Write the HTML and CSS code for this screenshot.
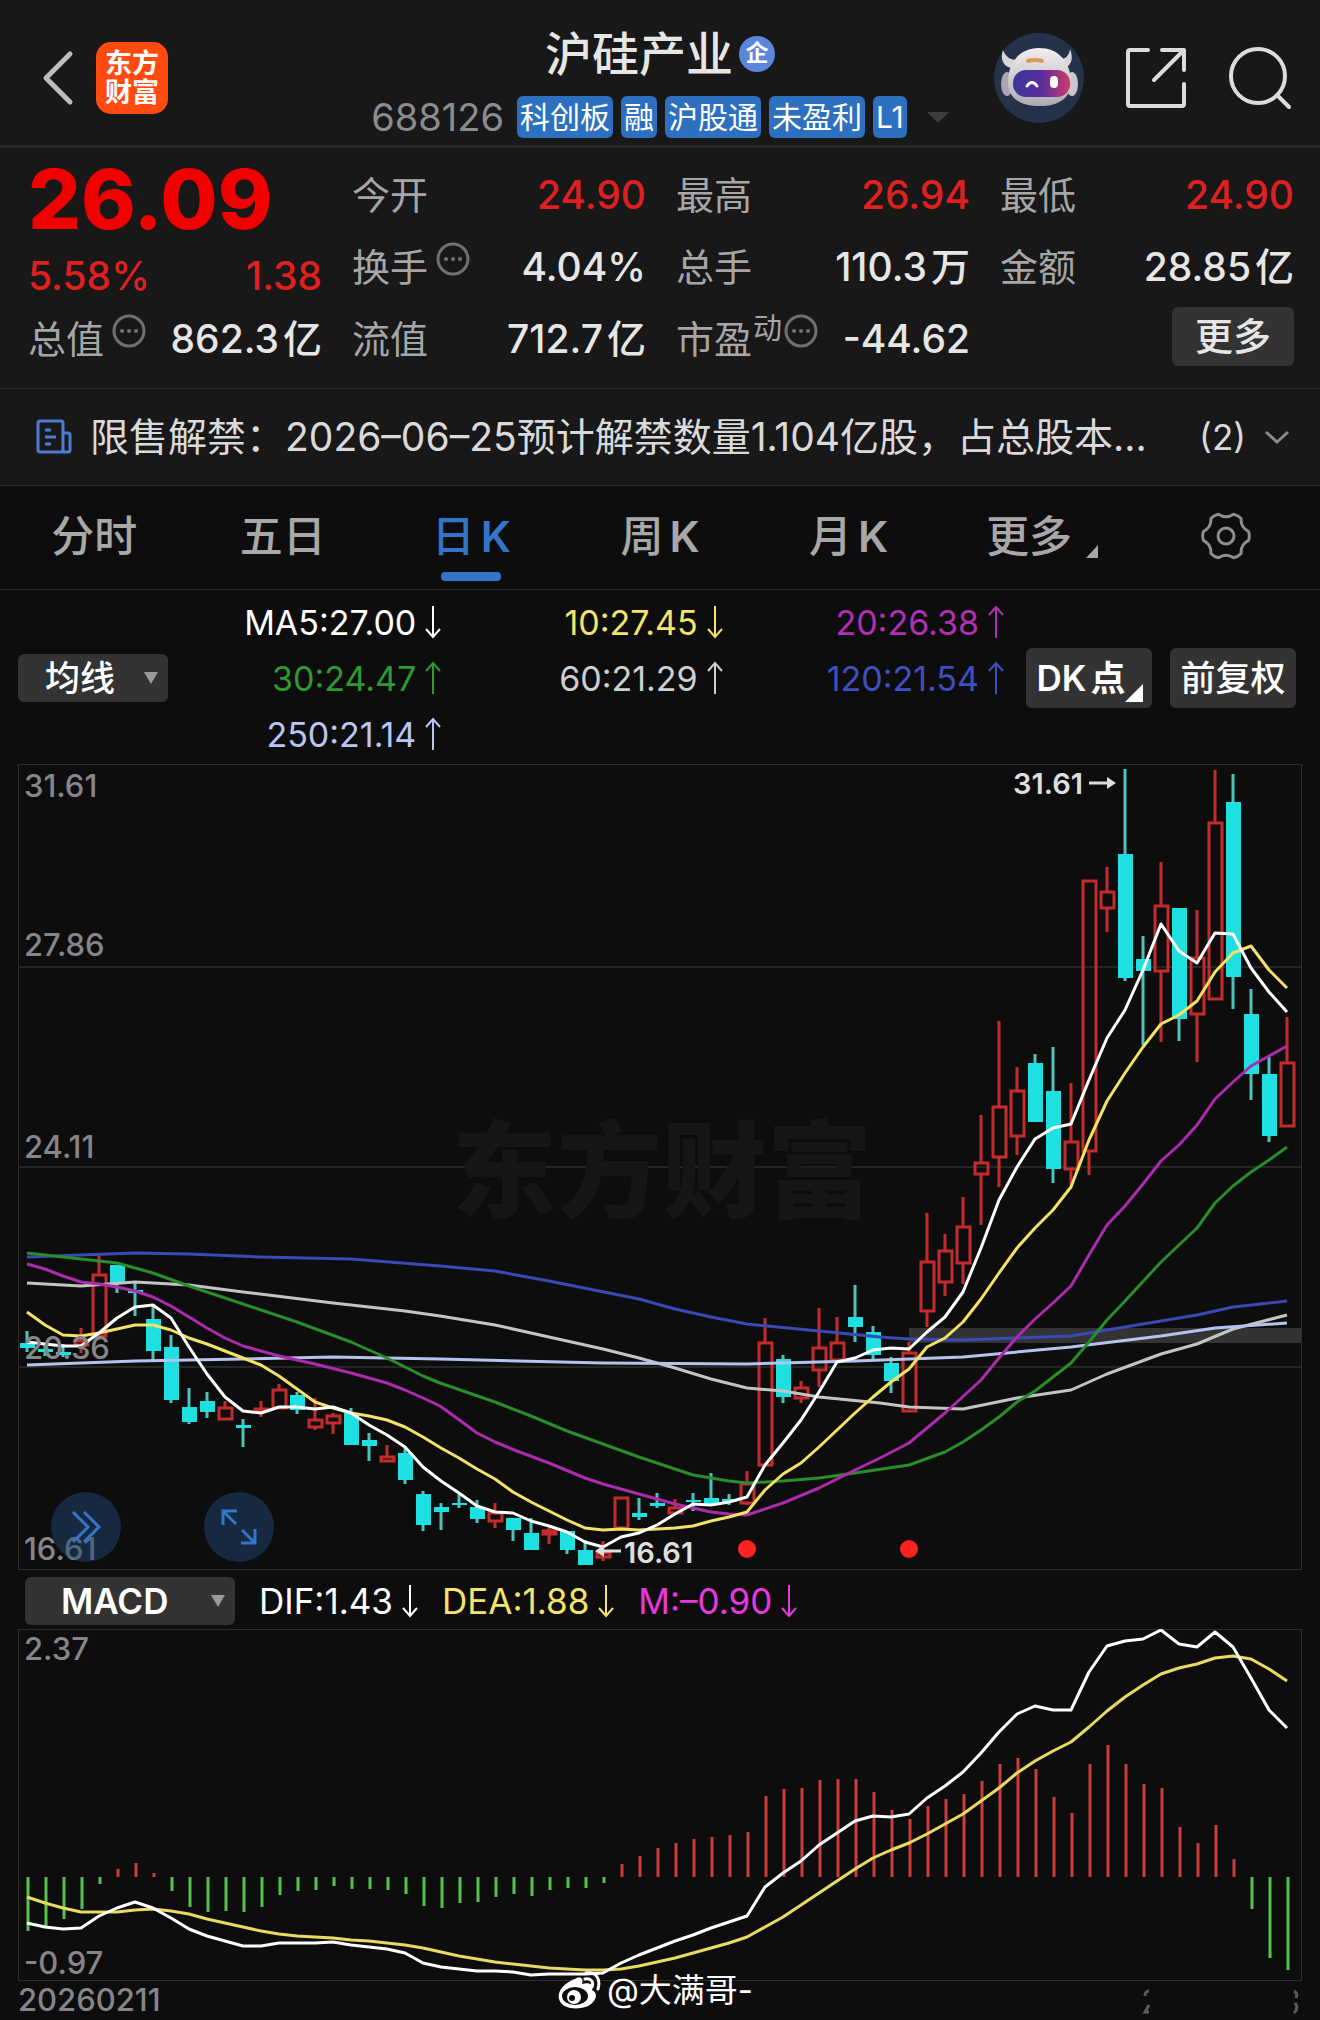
FILE: index.html
```html
<!DOCTYPE html>
<html lang="zh-CN">
<head>
    <meta charset="UTF-8">
    <meta name="viewport" content="width=device-width, initial-scale=1.0">
    <title>沪硅产业 688126</title>
    <link rel="stylesheet" href="styles.css">
</head>
<body>
    <svg width="0" height="0" class="defs" aria-hidden="true">
        <symbol id="down" viewBox="0 0 16 34"><path d="M8 1V32M1 24L8 32L15 24"/></symbol>
        <symbol id="up" viewBox="0 0 16 34"><path d="M8 33V2M1 10L8 2L15 10"/></symbol>
        <symbol id="info" viewBox="0 0 34 34"><circle cx="17" cy="17" r="15"/><path d="M10 17h.1M17 17h.1M24 17h.1" class="dots"/></symbol>
    </svg>

    <header class="header">
        <div class="header-left">
            <button class="icon-btn back" aria-label="返回">
                <svg width="34" height="56" viewBox="0 0 34 56"><path d="M30 4L6 28L30 52"/></svg>
            </button>
            <div class="logo">东方<br>财富</div>
        </div>
        <div class="header-title">
            <h1>沪硅产业<span class="badge">企</span></h1>
            <div class="tags">
                <span class="code">688126</span>
                <span class="tag">科创板</span>
                <span class="tag">融</span>
                <span class="tag">沪股通</span>
                <span class="tag">未盈利</span>
                <span class="tag">L1</span>
                <span class="caret"></span>
            </div>
        </div>
        <div class="header-right">
            <button class="icon-btn robot" aria-label="智能助手">
                <svg width="90" height="90" viewBox="0 0 90 90">
                    <defs>
                        <linearGradient id="visor" x1="0" x2="1">
                            <stop offset="0" stop-color="#39369a"/>
                            <stop offset=".5" stop-color="#5a2c9c"/>
                            <stop offset="1" stop-color="#cf3a68"/>
                        </linearGradient>
                        <linearGradient id="helmet" x1="0" x2="0" y1="0" y2="1">
                            <stop offset="0" stop-color="#f2efee"/>
                            <stop offset="1" stop-color="#aeaab4"/>
                        </linearGradient>
                    </defs>
                    <circle cx="45" cy="45" r="45" fill="#26314a"/>
                    <path d="M9 17C6 26 9 33 17 35L24 27C16 27 12 24 9 17ZM76 16C80 26 77 33 70 35L63 27C71 27 75 23 76 16Z" fill="#d9d6da"/>
                    <ellipse cx="13" cy="51" rx="6" ry="12" fill="#a9a6b2"/>
                    <ellipse cx="78" cy="51" rx="6" ry="12" fill="#c9c6cc"/>
                    <path d="M45 15C64 15 76 28 77 47C78 64 66 73 46 73C26 73 13 65 14 47C15 28 27 15 45 15Z" fill="url(#helmet)"/>
                    <rect x="19" y="37" width="57" height="27" rx="13" fill="url(#visor)"/>
                    <path d="M34 28Q41 26 48 28" stroke="#d99a55" stroke-width="4" fill="none"/>
                    <path d="M33 53Q38 46 43 53" stroke="#fff" stroke-width="3" fill="none"/>
                    <rect x="56" y="43" width="8" height="12" rx="4" fill="#fff"/>
                </svg>
            </button>
            <button class="icon-btn" aria-label="分享">
                <svg width="64" height="64" viewBox="0 0 64 64"><path d="M24 4H6Q4 4 4 6V58Q4 60 6 60H58Q60 60 60 58V38M38 4H60V24M59 5L30 34"/></svg>
            </button>
            <button class="icon-btn" aria-label="搜索">
                <svg width="64" height="64" viewBox="0 0 64 64"><circle cx="30" cy="30" r="27"/><path d="M49 49L61 61"/></svg>
            </button>
        </div>
    </header>

    <section class="quote">
        <div class="cell price">26.09</div>
        <div class="cell"><span class="label">今开</span><span class="red">24.90</span></div>
        <div class="cell"><span class="label">最高</span><span class="red">26.94</span></div>
        <div class="cell"><span class="label">最低</span><span class="red">24.90</span></div>

        <div class="cell change"><span class="red">5.58%</span><span class="red">1.38</span></div>
        <div class="cell"><span class="label">换手<svg class="info"><use href="#info"/></svg></span><span>4.04%</span></div>
        <div class="cell"><span class="label">总手</span><span>110.3<i>万</i></span></div>
        <div class="cell"><span class="label">金额</span><span>28.85<i>亿</i></span></div>

        <div class="cell"><span class="label">总值<svg class="info"><use href="#info"/></svg></span><span>862.3<i>亿</i></span></div>
        <div class="cell"><span class="label">流值</span><span>712.7<i>亿</i></span></div>
        <div class="cell"><span class="label">市盈<sup>动</sup><svg class="info tight"><use href="#info"/></svg></span><span>-44.62</span></div>
        <div class="cell end"><button class="more">更多</button></div>
    </section>

    <section class="notice">
        <svg class="doc" width="36" height="36" viewBox="0 0 36 36"><path d="M4 2H25Q27 2 27 4V33H4Q2 33 2 31V4Q2 2 4 2ZM27 14H32Q34 14 34 16V31Q34 33 32 33H27M9 11H15M9 18H20M9 25H15"/></svg>
        <a href="#">限售解禁：2026–06–25预计解禁数量1.104亿股，占总股本...</a>
        <span class="count">(2)</span>
        <svg width="26" height="16" viewBox="0 0 26 16" class="chev"><path d="M2 3L13 13L24 3"/></svg>
    </section>

    <nav class="tabs">
        <a href="#">分时</a>
        <a href="#">五日</a>
        <a href="#" class="active">日<b>K</b></a>
        <a href="#">周<b>K</b></a>
        <a href="#">月<b>K</b></a>
        <a href="#" class="corner">更多</a>
        <button class="icon-btn gear" aria-label="设置">
            <svg width="50" height="50" viewBox="-25 -25 50 50">
                <path d="M22.6-4.4Q24 0 22.6 4.4Q14.5 8.4 15.1 17.4Q12 20.8 7.5 21.7Q0 16.8-7.5 21.7Q-12 20.8-15.1 17.4Q-14.5 8.4-22.6 4.4Q-24 0-22.6-4.4Q-14.5-8.4-15.1-17.4Q-12-20.8-7.5-21.7Q0-16.8 7.5-21.7Q12-20.8 15.1-17.4Q14.5-8.4 22.6-4.4Z"/>
                <circle r="8"/>
            </svg>
        </button>
    </nav>

    <section class="ma">
        <div class="select-box">
            <select aria-label="主图指标"><option>均线</option></select>
        </div>
        <div class="ma-values">
            <span class="c-white">MA5:27.00<svg class="arrow"><use href="#down"/></svg></span>
            <span class="c-yellow">10:27.45<svg class="arrow"><use href="#down"/></svg></span>
            <span class="c-purple">20:26.38<svg class="arrow"><use href="#up"/></svg></span>
            <span class="c-green">30:24.47<svg class="arrow"><use href="#up"/></svg></span>
            <span class="c-grey">60:21.29<svg class="arrow"><use href="#up"/></svg></span>
            <span class="c-blue">120:21.54<svg class="arrow"><use href="#up"/></svg></span>
            <span class="c-pale">250:21.14<svg class="arrow"><use href="#up"/></svg></span>
        </div>
        <div class="ma-buttons">
            <button class="dk">DK<i>点</i></button>
            <button>前复权</button>
        </div>
    </section>

    <section class="chart">
        <svg id="kline" viewBox="18 764 1284 806"></svg>
        <button class="round first" aria-label="展开">
            <svg width="30" height="34" viewBox="0 0 30 34"><path d="M2 2L17 17L2 32M13 2L28 17L13 32"/></svg>
        </button>
        <button class="round second" aria-label="全屏">
            <svg width="36" height="36" viewBox="0 0 36 36"><path d="M2 16V2H16M2 2L15 15M34 20V34H20M34 34L21 21"/></svg>
        </button>
    </section>

    <section class="macd">
        <div class="select-box wide">
            <select aria-label="副图指标"><option>MACD</option></select>
        </div>
        <span class="c-white">DIF:1.43<svg class="arrow"><use href="#down"/></svg></span>
        <span class="c-yellow">DEA:1.88<svg class="arrow"><use href="#down"/></svg></span>
        <span class="c-pink">M:–0.90<svg class="arrow"><use href="#down"/></svg></span>
    </section>

    <section class="chart">
        <svg id="macd" viewBox="18 1629 1284 352"></svg>
    </section>

    <footer class="footer">
        <span>20260211</span>
        <svg width="158" height="28" viewBox="0 0 158 28" class="smudge"><path d="M7 3Q3 3 3 8M7 17L3 24H7M152 3Q156 5 154 10M153 15Q157 20 152 25"/></svg>
        <div class="credit">
            <svg width="46" height="40" viewBox="0 0 46 40">
                <path d="M18 9C23 6 27 8 25 14C32 12 37 14 35 20C42 23 39 32 31 36C22 40 5 40 2 29C0 20 9 12 18 9Z" fill="#fff"/>
                <ellipse cx="18" cy="26" rx="13" ry="9" fill="#0d0d0d"/>
                <circle cx="17" cy="27" r="7" fill="#fff"/>
                <circle cx="15" cy="28" r="3" fill="#0d0d0d"/>
                <path d="M28 9C34 8 37 12 35 17M29 3C39 1 44 9 41 19" fill="none" stroke="#fff" stroke-width="3" stroke-linecap="round"/>
            </svg>
            @大满哥-
        </div>
    </footer>

    <script src="script.js"></script>
</body>
</html>
```
FILE: styles.css
```css
* {
    box-sizing: border-box;
}
body {
    margin: 0;
    background-color: #0d0d0d;
    color: #e6e6e6;
    font-family: Inter, "Noto Sans CJK SC", sans-serif;
    font-size: 38px;
}
button, select {
    font-family: inherit;
    color: inherit;
    border: none;
    padding: 0;
}
a {
    color: inherit;
    text-decoration: none;
}
i {
    font-style: normal;
    margin-left: 4px;
}
svg {
    display: block;
    fill: none;
}
.defs {
    position: absolute;
}
.icon-btn {
    background: none;
    stroke: #dcdcdc;
    stroke-width: 4;
    stroke-linecap: round;
    stroke-linejoin: round;
}

/* header */
.header {
    display: grid;
    grid-template-columns: 1fr auto 1fr;
    height: 148px;
    padding: 0 28px;
    background-color: #181818;
    border-bottom: 3px solid #272727;
}
.header-left {
    display: flex;
    align-items: center;
    gap: 22px;
    height: 156px;
    padding-left: 12px;
}
.back {
    stroke: #bdbdbd;
    stroke-width: 5;
}
.logo {
    width: 72px;
    height: 72px;
    padding-top: 7px;
    border-radius: 15px;
    background-color: #ff4a10;
    color: #fff;
    font-size: 27px;
    line-height: 29px;
    font-weight: 700;
    text-align: center;
}
.header-title {
    padding-top: 22px;
}
.header-title h1 {
    display: flex;
    justify-content: center;
    align-items: center;
    gap: 6px;
    margin: 0 0 10px;
    font-size: 47px;
    line-height: 64px;
    font-weight: 500;
}
.badge {
    width: 36px;
    height: 36px;
    border-radius: 50%;
    background-color: #5b86dd;
    color: #fff;
    font-size: 23px;
    line-height: 34px;
    font-weight: 700;
    text-align: center;
}
.tags {
    display: flex;
    align-items: center;
    gap: 8px;
}
.code {
    margin-right: 5px;
    color: #8b8b90;
    font-size: 38px;
    line-height: 42px;
}
.tag {
    padding: 0 3px;
    border-radius: 6px;
    background-color: #2d70c0;
    color: #fff;
    font-size: 30px;
    line-height: 42px;
}
.caret {
    margin-left: 12px;
    border: 11px solid transparent;
    border-top-color: #3c3c3c;
    border-bottom-width: 0;
}
.header-right {
    display: flex;
    justify-content: flex-end;
    align-items: center;
    gap: 40px;
    height: 156px;
}
.robot {
    stroke: none;
}

/* quote */
.quote {
    display: grid;
    grid-template-columns: repeat(4, 1fr);
    grid-auto-rows: 72px;
    column-gap: 30px;
    padding: 11px 26px 13px 28px;
    background-color: #181818;
    border-bottom: 1px solid #2b2b2b;
    font-size: 39px;
    line-height: 50px;
    font-weight: 500;
}
.cell {
    display: flex;
    justify-content: space-between;
    align-items: center;
    white-space: nowrap;
}
.cell.end {
    justify-content: flex-end;
    padding-bottom: 6px;
}
.price {
    padding-top: 8px;
    color: #f20000;
    font-size: 83px;
    line-height: 72px;
    font-weight: 800;
}
.change {
    padding-top: 18px;
}
.label {
    display: flex;
    align-items: center;
    color: #a6a6a6;
    font-size: 38px;
    font-weight: 400;
}
.label sup {
    margin: 0 2px 20px 1px;
    font-size: 29px;
    line-height: 30px;
}
.red {
    color: #df2020;
}
.info {
    width: 34px;
    height: 34px;
    margin: 0 0 16px 8px;
    stroke: #707070;
    stroke-width: 3;
}
.info.tight {
    margin-left: 0;
}
.dots {
    stroke-width: 4;
    stroke-linecap: round;
}
.more {
    width: 122px;
    height: 59px;
    border-radius: 6px;
    background-color: #333;
    font-size: 38px;
    line-height: 54px;
    font-weight: 500;
}

/* notice */
.notice {
    display: flex;
    align-items: center;
    height: 97px;
    padding: 0 30px 0 36px;
    background-color: #181818;
    border-bottom: 1px solid #2b2b2b;
    color: #dadada;
    line-height: 50px;
    white-space: nowrap;
}
.notice a {
    flex: 1;
    margin-left: 18px;
    font-size: 39px;
}
.doc {
    stroke: #4a7cd6;
    stroke-width: 3;
}
.count {
    margin-right: 18px;
    font-size: 35px;
}
.chev {
    stroke: #8a8a8a;
    stroke-width: 3;
}

/* tabs */
.tabs {
    display: grid;
    grid-template-columns: repeat(7, 1fr);
    height: 104px;
    border-bottom: 1px solid #2b2b2b;
    color: #a8a8a8;
    font-size: 43px;
    line-height: 101px;
    font-weight: 500;
    text-align: center;
}
.tabs b {
    margin-left: 6px;
    font-weight: 600;
}
.tabs a {
    position: relative;
}
.tabs .active {
    color: #3375c8;
}
.active::after {
    content: "";
    position: absolute;
    left: 50%;
    bottom: 8px;
    width: 60px;
    height: 9px;
    margin-left: -30px;
    border-radius: 4px;
    background-color: #3375c8;
}
.corner {
    padding-right: 16px;
}
.corner::after {
    content: "";
    position: absolute;
    right: 33px;
    bottom: 31px;
    border-left: 12px solid transparent;
    border-bottom: 13px solid #a8a8a8;
}
.gear {
    display: flex;
    justify-content: center;
    align-items: center;
    padding-bottom: 4px;
    stroke: #8e8e8e;
    stroke-width: 3;
}

/* moving averages */
.ma {
    display: flex;
    align-items: center;
    height: 174px;
    padding: 2px 24px 0 18px;
}
.select-box {
    position: relative;
    width: 150px;
}
.select-box.wide {
    width: 210px;
}
.select-box select {
    appearance: none;
    display: block;
    width: 100%;
    height: 48px;
    padding-left: 27px;
    border-radius: 6px;
    background-color: #333;
    color: #fff;
    font-size: 35px;
    font-weight: 500;
}
.select-box.wide select {
    padding-left: 36px;
    font-weight: 600;
}
.select-box::after {
    content: "";
    position: absolute;
    right: 10px;
    top: 18px;
    border: 7px solid transparent;
    border-top: 12px solid #9a9a9a;
    border-bottom-width: 0;
}
.ma-values {
    flex: 1;
    display: grid;
    grid-template-columns: repeat(3, 1fr);
    grid-auto-rows: 56px;
    margin-left: -8px;
}
.ma-values span, .macd span {
    display: flex;
    justify-content: flex-end;
    align-items: center;
    font-size: 34px;
}
.macd span {
    font-size: 35px;
}
.arrow {
    width: 16px;
    height: 34px;
    margin-left: 9px;
    stroke: currentColor;
    stroke-width: 2;
}
.c-white { color: #fff; }
.c-yellow { color: #f5e36b; }
.c-purple { color: #b32fb3; }
.c-green { color: #2f9a2f; }
.c-grey { color: #cfcfcf; }
.c-blue { color: #3f4fc0; }
.c-pale { color: #b9c6f2; }
.c-pink { color: #e838e0; }
.ma-buttons {
    display: flex;
    gap: 18px;
    margin-left: 22px;
}
.ma-buttons button {
    position: relative;
    width: 126px;
    height: 60px;
    border-radius: 6px;
    background-color: #333;
    color: #fff;
    font-size: 35px;
    line-height: 54px;
    font-weight: 500;
    white-space: nowrap;
}
.ma-buttons .dk {
    padding-right: 16px;
    font-weight: 600;
}
.dk::after {
    content: "";
    position: absolute;
    right: 9px;
    bottom: 6px;
    border-left: 18px solid transparent;
    border-bottom: 18px solid #fff;
}

/* charts */
.chart {
    position: relative;
    margin: 0 18px;
}
.chart > svg {
    width: 100%;
}
.frame {
    stroke: #2e2e2e;
    stroke-width: 1;
}
.grid {
    stroke: #262626;
    stroke-width: 2;
}
.mark {
    fill: #161616;
    font-size: 105px;
    font-weight: 900;
}
.axis {
    fill: #86868a;
    font-size: 31px;
    font-weight: 500;
}
.tip {
    fill: #dedede;
    font-size: 29px;
    font-weight: 600;
}
.round {
    position: absolute;
    bottom: 8px;
    display: flex;
    justify-content: center;
    align-items: center;
    width: 70px;
    height: 70px;
    border-radius: 50%;
    background-color: rgba(32, 70, 115, 0.5);
    stroke: #3375c8;
    stroke-width: 3;
}
.round.first {
    left: 33px;
}
.round.second {
    left: 186px;
}

/* macd */
.macd {
    display: flex;
    align-items: center;
    gap: 24px;
    height: 59px;
    padding: 2px 0 0 25px;
}

/* footer */
.footer {
    position: relative;
    display: flex;
    justify-content: space-between;
    padding: 0 20px 0 18px;
    color: #86868a;
    font-size: 31px;
    line-height: 38px;
    font-weight: 500;
}
.smudge {
    margin-top: 7px;
    stroke: #5a5a5a;
    stroke-width: 3;
}
.credit {
    position: absolute;
    left: 50%;
    top: -12px;
    display: flex;
    align-items: center;
    gap: 4px;
    margin-left: -103px;
    color: #fff;
    font-size: 33px;
    line-height: 42px;
    font-weight: 400;
    white-space: nowrap;
}
```
FILE: script.js
```js
const STEP = 18;
const UP = '#c42c2c';
const DOWN = '#1fe0e0';

// type, high, body top, body bottom, low
const candles = [
    ['d', 1331, 1343, 1348, 1352], ['d', 1343, 1349, 1352, 1356], ['d', 1344, 1352, 1355, 1357],
    ['u', 1328, 1340, 1346, 1353], ['u', 1255, 1274, 1337, 1340], ['d', 1265, 1265, 1283, 1293],
    ['d', 1281, 1290, 1293, 1316], ['d', 1304, 1319, 1351, 1360], ['d', 1335, 1347, 1400, 1403],
    ['d', 1388, 1407, 1422, 1424], ['d', 1392, 1401, 1412, 1418], ['u', 1401, 1407, 1420, 1420],
    ['d', 1419, 1425, 1428, 1447], ['u', 1401, 1408, 1412, 1417], ['u', 1384, 1389, 1409, 1409],
    ['d', 1392, 1395, 1410, 1414], ['u', 1398, 1419, 1428, 1430], ['u', 1413, 1415, 1424, 1434],
    ['d', 1408, 1413, 1445, 1445], ['d', 1433, 1440, 1446, 1461], ['u', 1445, 1456, 1462, 1462],
    ['d', 1446, 1453, 1480, 1484], ['d', 1491, 1494, 1525, 1531], ['d', 1503, 1507, 1512, 1530],
    ['d', 1493, 1503, 1505, 1508], ['d', 1500, 1507, 1519, 1523], ['u', 1503, 1512, 1522, 1528],
    ['d', 1518, 1518, 1530, 1541], ['d', 1518, 1533, 1550, 1550], ['u', 1528, 1530, 1535, 1544],
    ['d', 1531, 1531, 1550, 1554], ['d', 1540, 1550, 1565, 1565], ['u', 1541, 1552, 1558, 1561],
    ['u', 1497, 1497, 1529, 1529], ['d', 1498, 1513, 1517, 1520], ['d', 1493, 1503, 1506, 1508],
    ['u', 1499, 1507, 1514, 1514], ['d', 1493, 1500, 1502, 1511], ['d', 1473, 1498, 1504, 1504],
    ['d', 1494, 1499, 1502, 1505], ['u', 1471, 1483, 1504, 1505], ['u', 1318, 1342, 1466, 1466],
    ['d', 1355, 1359, 1397, 1403], ['u', 1381, 1387, 1399, 1403], ['u', 1308, 1347, 1371, 1387],
    ['u', 1317, 1342, 1361, 1361], ['d', 1285, 1317, 1327, 1342], ['d', 1326, 1332, 1355, 1359],
    ['d', 1357, 1363, 1381, 1393], ['u', 1342, 1352, 1412, 1412], ['u', 1213, 1261, 1312, 1327],
    ['u', 1234, 1250, 1283, 1296], ['u', 1197, 1226, 1264, 1284], ['u', 1115, 1162, 1175, 1225],
    ['u', 1021, 1106, 1158, 1187], ['u', 1067, 1090, 1137, 1155], ['d', 1054, 1063, 1122, 1122],
    ['d', 1047, 1091, 1169, 1183], ['u', 1083, 1141, 1170, 1185], ['u', 880, 880, 1152, 1175],
    ['u', 867, 891, 909, 932], ['d', 769, 854, 978, 981], ['d', 936, 959, 971, 1045],
    ['u', 862, 905, 972, 1042], ['d', 908, 908, 1019, 1041], ['u', 910, 957, 1015, 1062],
    ['u', 770, 822, 1000, 1000], ['d', 774, 802, 977, 1009], ['d', 989, 1014, 1074, 1100],
    ['d', 1057, 1074, 1136, 1142], ['u', 1017, 1062, 1127, 1127]
];

const ma5 = [1342, 1344, 1346, 1346, 1333, 1318, 1307, 1305, 1318, 1347, 1374, 1397, 1411, 1413, 1407, 1407, 1409, 1407,
    1413, 1425, 1435, 1447, 1467, 1481, 1493, 1506, 1512, 1513, 1521, 1526, 1532, 1542, 1547, 1537, 1533, 1525, 1514, 1504,
    1505, 1502, 1497, 1465, 1443, 1420, 1392, 1362, 1358, 1350, 1348, 1349, 1332, 1317, 1292, 1248, 1200, 1167, 1139, 1128,
    1124, 1080, 1038, 1010, 970, 924, 951, 963, 933, 934, 968, 992, 1012];
const ma10 = [1312, 1325, 1335, 1336, 1333, 1329, 1325, 1325, 1330, 1338, 1344, 1351, 1358, 1365, 1376, 1389, 1402, 1408,
    1413, 1416, 1420, 1427, 1437, 1448, 1458, 1469, 1479, 1492, 1502, 1511, 1520, 1528, 1530, 1529, 1530, 1529, 1528, 1526,
    1521, 1517, 1512, 1490, 1474, 1463, 1447, 1430, 1413, 1397, 1382, 1369, 1347, 1338, 1322, 1299, 1273, 1248, 1228, 1210,
    1187, 1140, 1101, 1073, 1047, 1024, 1015, 1001, 972, 953, 946, 970, 988];

const longLines = {
    '#3a49b5': '27,1257 81,1255 135,1253 189,1254 261,1257 351,1259 440,1266 495,1271 549,1281 639,1299 675,1309 711,1317 747,1324 819,1331 880,1337 909,1339 963,1340 1017,1338 1071,1336 1143,1324 1197,1315 1233,1307 1287,1301',
    '#c4c4c4': '27,1283 81,1286 135,1282 189,1285 243,1292 333,1303 405,1311 440,1316 495,1325 549,1337 603,1349 639,1358 675,1368 711,1379 747,1388 783,1391 819,1397 880,1403 909,1407 963,1409 1017,1398 1071,1390 1107,1374 1161,1354 1197,1344 1233,1329 1287,1315',
    '#b5c3f0': '27,1365 135,1361 243,1359 333,1357 440,1359 603,1363 747,1364 855,1361 963,1357 1071,1347 1161,1336 1215,1328 1287,1323',
    '#2a8c2a': '27,1253 81,1259 117,1263 153,1273 189,1286 243,1304 297,1322 351,1342 387,1358 423,1376 440,1383 495,1402 531,1416 567,1431 603,1444 639,1457 675,1469 693,1475 729,1481 747,1483 783,1481 819,1478 855,1473 909,1465 945,1452 963,1442 981,1430 999,1417 1017,1402 1035,1391 1053,1377 1071,1363 1089,1342 1107,1320 1125,1301 1161,1262 1197,1228 1215,1203 1233,1186 1251,1172 1269,1160 1287,1147',
    '#ac2bac': '27,1264 45,1269 63,1276 81,1282 99,1284 117,1287 135,1291 153,1297 171,1306 189,1317 207,1328 225,1338 243,1346 279,1356 315,1364 351,1373 387,1383 405,1390 423,1398 440,1406 458,1419 477,1433 495,1442 517,1451 549,1463 585,1478 603,1484 639,1494 675,1504 711,1512 729,1514 747,1515 783,1503 819,1488 855,1470 880,1458 909,1443 945,1413 981,1380 999,1358 1017,1337 1035,1319 1053,1303 1071,1286 1089,1255 1107,1225 1125,1206 1143,1184 1161,1161 1179,1145 1197,1125 1215,1099 1233,1082 1251,1066 1269,1056 1287,1046'
};

const bars = [-54, -49, -42, -32, -7, 8, 14, 4, -14, -30, -35, -34, -35, -30, -18, -14, -13, -9, -12, -12, -13, -17, -29,
    -31, -26, -25, -20, -17, -19, -13, -11, -11, -6, 13, 21, 29, 34, 38, 40, 42, 45, 81, 88, 89, 97, 98, 98, 85, 67, 58, 71,
    78, 83, 96, 113, 119, 108, 80, 64, 113, 132, 113, 93, 89, 50, 34, 52, 18, -32, -81, -93];
const dif = [1923, 1927, 1929, 1928, 1916, 1908, 1902, 1908, 1918, 1929, 1936, 1941, 1946, 1946, 1943, 1943, 1943, 1942,
    1945, 1947, 1949, 1953, 1963, 1967, 1969, 1971, 1971, 1972, 1975, 1974, 1974, 1974, 1973, 1963, 1955, 1948, 1941, 1935,
    1928, 1922, 1916, 1887, 1873, 1861, 1845, 1833, 1821, 1816, 1817, 1814, 1798, 1786, 1772, 1753, 1732, 1714, 1706, 1710,
    1710, 1672, 1646, 1641, 1639, 1630, 1644, 1647, 1632, 1647, 1678, 1710, 1728];
const dea = [1897, 1903, 1908, 1912, 1912, 1912, 1910, 1909, 1911, 1914, 1919, 1923, 1927, 1931, 1934, 1936, 1937, 1938,
    1940, 1941, 1943, 1945, 1948, 1952, 1956, 1959, 1962, 1964, 1966, 1968, 1969, 1970, 1970, 1969, 1966, 1962, 1958, 1953,
    1948, 1943, 1937, 1927, 1917, 1905, 1893, 1881, 1869, 1858, 1850, 1843, 1834, 1824, 1814, 1801, 1788, 1773, 1761, 1751,
    1742, 1727, 1711, 1697, 1685, 1674, 1668, 1664, 1658, 1656, 1659, 1669, 1681];

function line(points, color) {
    return `<polyline points="${points}" stroke="${color}" stroke-width="3" stroke-linejoin="round"/>`;
}

function series(values, color) {
    return line(values.map((y, i) => `${27 + i * STEP},${y}`).join(' '), color);
}

function label(x, y, text, cls) {
    return `<text x="${x}" y="${y}" class="${cls}">${text}</text>`;
}

function candle([type, high, top, bottom, low], i) {
    const x = 27 + i * STEP;
    if (type === 'd') {
        return `<path d="M${x} ${high}V${low}" stroke="#4cc4bd" stroke-width="3"/>
            <rect x="${x - 7}" y="${top}" width="15" height="${bottom - top}" fill="${DOWN}"/>`;
    }
    return `<path d="M${x} ${high}V${top}M${x} ${bottom}V${low}" stroke="${UP}" stroke-width="3"/>
        <rect x="${x - 6}" y="${top + 1}" width="13" height="${Math.max(bottom - top - 2, 1)}" stroke="${UP}" stroke-width="3"/>`;
}

// price chart
let html = '<rect x="18.5" y="764.5" width="1283" height="805" class="frame"/>';
html += '<path d="M18 967H1301M18 1167H1301M18 1367H1301" class="grid"/>';
html += label(452, 1209, '东方财富', 'mark');
html += '<rect x="909" y="1328" width="392" height="15" fill="#333"/>';
html += candles.map(candle).join('');
for (const color in longLines) {
    html += line(longLines[color], color);
}
html += series(ma10, '#f2e266') + series(ma5, '#fff');
html += label(24, 797, '31.61', 'axis') + label(24, 956, '27.86', 'axis') + label(24, 1158, '24.11', 'axis')
    + label(24, 1359, '20.36', 'axis') + label(24, 1560, '16.61', 'axis');
html += label(1013, 794, '31.61', 'tip') + '<path d="M1089 783H1108" stroke="#dedede" stroke-width="3"/><path d="M1107 777L1116 783L1107 789Z" fill="#dedede"/>';
html += label(624, 1563, '16.61', 'tip') + '<path d="M602 1551H621" stroke="#dedede" stroke-width="3"/><path d="M604 1545L595 1551L604 1557Z" fill="#dedede"/>';
html += '<circle cx="747" cy="1549" r="9" fill="#f22"/><circle cx="909" cy="1549" r="9" fill="#f22"/>';
document.getElementById('kline').innerHTML = html;

// macd chart
html = '<rect x="18.5" y="1629.5" width="1283" height="351" class="frame"/>';
html += bars.map((h, i) => {
    const x = 28 + i * STEP;
    return `<path d="M${x} 1877V${1877 - h}" stroke="${h > 0 ? '#cc3d3b' : '#57c24d'}" stroke-width="3"/>`;
}).join('');
html += series(dea, '#e8da62') + series(dif, '#fff');
html += label(24, 1660, '2.37', 'axis') + label(24, 1974, '-0.97', 'axis');
document.getElementById('macd').innerHTML = html;
```
